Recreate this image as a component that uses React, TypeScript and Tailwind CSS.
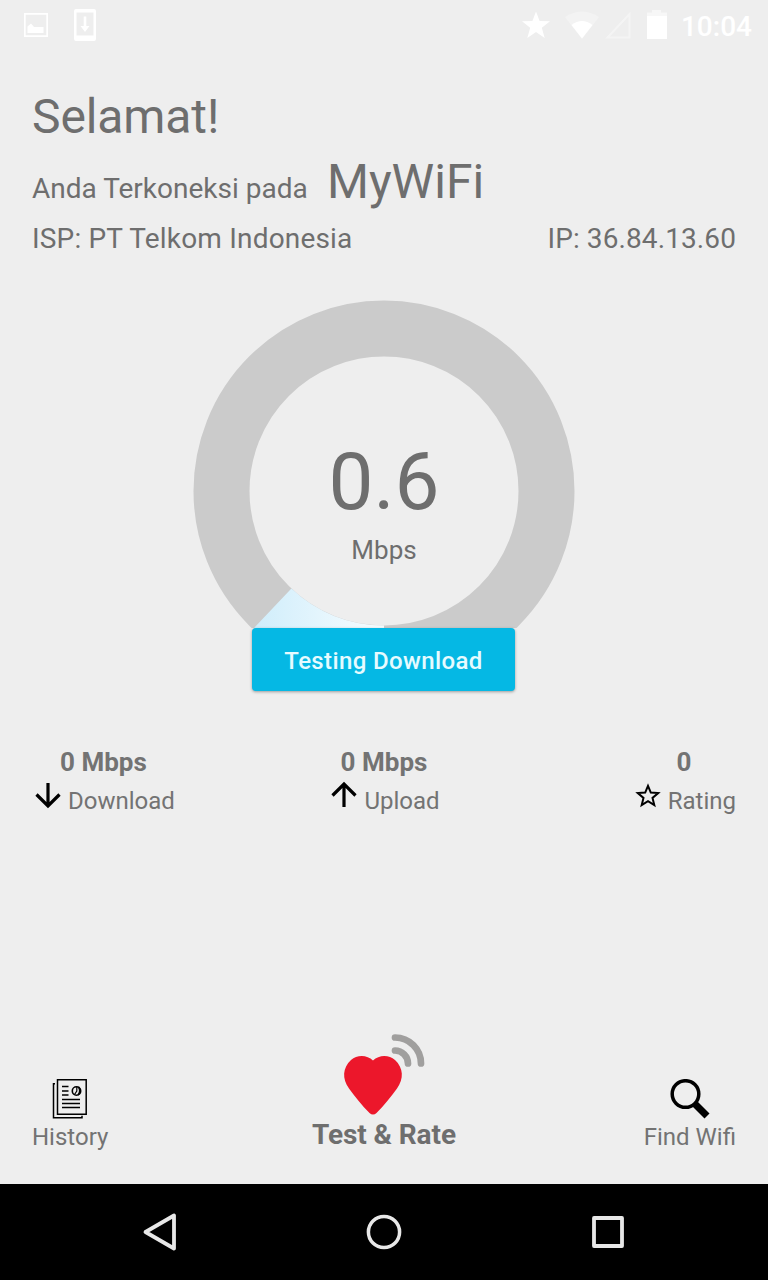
import { type PropsWithChildren } from 'react';

const GAUGE_RADIUS = 162.5;

function StatusBar() {
  return (
    <header className="flex h-[50px] items-center justify-between pr-4 pl-6 text-white">
      <div className="flex items-center gap-[26px]">
        <svg className="h-6 w-6" viewBox="0 0 24 24" fill="currentColor">
          <path
            fillRule="evenodd"
            d="M0 0H24V24H0ZM1.7 1.7V22.3H22.3V1.7ZM3.5 20V13.500L7 10.500L10 14H19.5V20Z"
          />
        </svg>
        <svg className="h-8 w-[22px]" viewBox="0 0 22 32" fill="currentColor">
          <path
            fillRule="evenodd"
            d="M2 0H20Q22 0 22 2V30Q22 32 20 32H2Q0 32 0 30V2Q0 0 2 0ZM2.5 3.5V26.5H19.5V3.5ZM9.7 7.5H12.3V17H15.5L11 23L6.5 17H9.7Z"
          />
        </svg>
      </div>
      <div className="flex items-center">
        <svg className="h-7 w-[30px]" viewBox="0 0 30 28" fill="currentColor">
          <path d="M15 0.5L18.6 10L29 10.3L20.8 16.8L23.7 27L15 21.1L6.3 27L9.2 16.8L1 10.3L11.4 10Z" />
        </svg>
        <svg className="ml-[13px] h-7 w-9" viewBox="0 0 36 28" fill="currentColor">
          <path opacity="0.3" d="M1 6Q18 -5 35 6L18 28Z" />
          <path d="M7.500 14Q18 6 28.500 14L18 27.500Z" />
        </svg>
        <svg
          className="ml-[5px] h-7 w-[26px]"
          viewBox="0 0 26 28"
          fill="none"
          stroke="currentColor"
          strokeWidth="2"
          opacity="0.4"
        >
          <path d="M2.500 26.500H24.500V3Z" />
        </svg>
        <svg
          className="ml-4 h-[30px] w-5"
          viewBox="0 0 20 30"
          fill="currentColor"
        >
          <path opacity="0.5" d="M0 2.500H5V0H14V2.500H20V7H0Z" />
          <path d="M0 6H20V29H0Z" />
        </svg>
        <span className="ml-3.5 pt-[3px] text-[28px] leading-8 font-medium">
          10:04
        </span>
      </div>
    </header>
  );
}

function Gauge() {
  return (
    <svg className="h-[332px] w-[384px]" viewBox="0 0 384 332">
      <defs>
        <linearGradient id="progress" x1="0" y1="0" x2="1" y2="0">
          <stop offset="0" stopColor="#cfedfb" />
          <stop offset="1" stopColor="#f8fdff" />
        </linearGradient>
      </defs>
      <circle
        cx="192"
        cy="195"
        r={GAUGE_RADIUS}
        fill="none"
        stroke="#cbcbcb"
        strokeWidth="56"
      />
      <path
        d="M192 385.500A190.500 190.500 0 0 1 60.900 333.200L99.400 292.600A134.500 134.500 0 0 0 192 329.500Z"
        fill="url(#progress)"
      />
    </svg>
  );
}

type StatProps = PropsWithChildren<{
  value: string;
  label: string;
  className: string;
}>;

function Stat({ value, label, className, children }: StatProps) {
  return (
    <div className={`flex flex-col items-center ${className}`}>
      <p className="text-[26px] leading-[30px] font-bold">{value}</p>
      <div className="mt-0.5 flex gap-1">
        <svg
          className="h-8 w-8"
          viewBox="0 0 32 32"
          fill="none"
          stroke="#000"
          strokeWidth="3.2"
        >
          {children}
        </svg>
        <span className="mt-1.5 text-2xl leading-8">{label}</span>
      </div>
    </div>
  );
}

function HistoryIcon() {
  return (
    <svg
      className="h-10 w-9"
      viewBox="0 0 36 40"
      fill="none"
      stroke="#000"
      strokeWidth="1.5"
    >
      <path d="M5.500 0.800H34.200V35.200H5.500Z" />
      <path d="M3 4.800H1.500V38.700H30V36.700" />
      <path d="M10 7.500H16.500M10 12H16.500M10 16H16.500M10 20.500H28M10 24.500H28M10 28.500H28" />
      <circle cx="24.500" cy="12" r="4.200" strokeWidth="1.600" />
      <path d="M26.500 8Q29.500 12 26 16" strokeWidth="1.800" />
      <path d="M24.800 8V12L22.500 15.500" strokeWidth="1.200" />
    </svg>
  );
}

function HeartIcon() {
  return (
    <svg className="h-[84px] w-[84px]" viewBox="0 0 84 84">
      <path
        d="M31 26.500C25 20.500 15 20.500 9 26C0.500 34 0 44.500 7 54.500C13 62.500 20 71.500 27.500 79Q31 82 34.500 79C42 71.500 49 62.500 55 54.500C62 44.500 61.500 34 53 26C47 20.500 37 20.500 31 26.500Z"
        fill="#ec172b"
      />
      <path
        d="M53 3.500A26 26 0 0 1 79 29.500M53 16.500A13 13 0 0 1 66 29.500"
        fill="none"
        stroke="#a09f9e"
        strokeWidth="6.700"
        strokeLinecap="round"
      />
    </svg>
  );
}

function SearchIcon() {
  return (
    <svg className="h-10 w-10" viewBox="0 0 40 40" fill="none" stroke="#000">
      <circle cx="15.500" cy="15" r="13.300" strokeWidth="3.500" />
      <path d="M24.500 24.500L37 37" strokeWidth="7" />
    </svg>
  );
}

function SystemNavigation() {
  return (
    <nav className="flex h-24 items-center justify-between px-[140px]">
      <svg
        className="h-10 w-10"
        viewBox="0 0 40 40"
        fill="none"
        stroke="#e8e8e8"
        strokeWidth="3.800"
        strokeLinejoin="round"
      >
        <path d="M5.500 20L34 3.500V36.500Z" />
      </svg>
      <svg
        className="h-10 w-10"
        viewBox="0 0 40 40"
        fill="none"
        stroke="#e8e8e8"
        strokeWidth="3.500"
      >
        <circle cx="20" cy="20" r="15.600" />
      </svg>
      <svg
        className="h-10 w-10"
        viewBox="0 0 40 40"
        fill="none"
        stroke="#e8e8e8"
        strokeWidth="3.800"
        strokeLinejoin="round"
      >
        <path d="M6 6H34V34H6Z" />
      </svg>
    </nav>
  );
}

export default function App() {
  return (
    <div className="flex h-[1280px] w-[768px] flex-col overflow-hidden bg-black font-[Roboto,sans-serif] text-[#6e6e6e]">
      <div className="flex h-[1184px] flex-col bg-[#eeeeee]">
        <StatusBar />
        <section className="px-8 pt-[39px]">
          <h1 className="text-5xl leading-[56px] tracking-[-0.1px]">Selamat!</h1>
          <div className="mt-[9px] flex items-baseline">
            <span className="w-[295px] text-[28px]">Anda Terkoneksi pada</span>
            <span className="text-5xl leading-[56px]">MyWiFi</span>
          </div>
          <div className="mt-[13px] flex justify-between text-[28px] leading-8">
            <span className="tracking-[0.18px]">ISP: PT Telkom Indonesia</span>
            <span className="tracking-[0.1px]">IP: 36.84.13.60</span>
          </div>
        </section>

        <section className="mt-[41px] flex flex-col items-center">
          <div className="grid justify-items-center">
            <div className="col-start-1 row-start-1">
              <Gauge />
            </div>
            <div className="col-start-1 row-start-1 flex flex-col items-center pt-[140px]">
              <span className="text-[80px] leading-[92px]">0.6</span>
              <span className="mt-[7px] text-[26px] leading-[30px]">Mbps</span>
            </div>
          </div>
          <button className="mr-px h-[63px] w-[263px] rounded-[4px] bg-[#05b8e4] pt-0.5 text-2xl font-medium tracking-[0.38px] text-[#e6fbff] shadow-[0_1px_3px_rgba(0,0,0,0.35)]">
            Testing Download
          </button>
        </section>

        <section className="mt-14 grid grid-cols-3 px-8 text-[#737373]">
          <Stat value="0 Mbps" label="Download" className="justify-self-start">
            <path d="M16 4V27M4.500 15.500L16 27L27.500 15.500" />
          </Stat>
          <Stat value="0 Mbps" label="Upload" className="justify-self-center">
            <path d="M16 28V5M4.500 16.500L16 5L27.500 16.500" />
          </Stat>
          <Stat value="0" label="Rating" className="justify-self-end">
            <path
              d="M16 6.800L18.800 13.600L26.200 14.100L20.500 18.900L22.300 26.100L16 22.200L9.700 26.100L11.500 18.900L5.800 14.100L13.200 13.600Z"
              strokeWidth="2"
            />
          </Stat>
        </section>

        <section className="mt-auto grid grid-cols-3 items-end px-8 pb-[31px] text-2xl leading-8 text-[#737373]">
          <div className="flex flex-col items-center gap-0.5 justify-self-start">
            <HistoryIcon />
            <span>History</span>
          </div>
          <div className="flex flex-col items-center gap-px justify-self-center pb-0.5">
            <HeartIcon />
            <span className="text-[28px] leading-8 font-bold tracking-[-0.1px] text-[#6e6e6e]">
              Test & Rate
            </span>
          </div>
          <div className="flex flex-col items-center gap-0.5 justify-self-end">
            <SearchIcon />
            <span>Find Wifi</span>
          </div>
        </section>
      </div>
      <SystemNavigation />
    </div>
  );
}
